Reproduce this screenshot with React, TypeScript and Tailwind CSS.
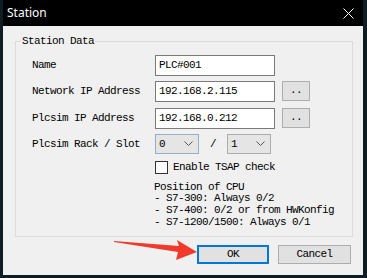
import React from "react";

const mono = "font-['Liberation_Mono',monospace] text-[11px] tracking-[-0.6px] text-black";

function Chevron() {
  return (
    <svg width="9" height="6" viewBox="0 0 9 6" className="ml-auto mr-[5px]">
      <path d="M0.5 0.5 L4.5 4.5 L8.5 0.5" fill="none" stroke="#555" strokeWidth="1" />
    </svg>
  );
}

function Field({ label, value, dots, top }: { label: string; value: string; dots?: boolean; top: string }) {
  return (
    <div className={`flex items-center h-[21px] ${top}`}>
      <span className="w-[123px]">{label}</span>
      <div className="w-[120px] h-[21px] border border-[#7a7a7a] bg-white pl-[3px] flex items-center">{value}</div>
      {dots && (
        <div className="ml-[7px] w-[28px] h-[20px] -mt-[2px] border border-[#adadad] bg-[#e1e1e1] flex items-center justify-center">..</div>
      )}
    </div>
  );
}

export default function App() {
  return (
    <div className="relative w-[367px] h-[278px] bg-[#0e1c24] pl-[3px] pr-[4px] pb-[3px] flex flex-col overflow-hidden">
      <div className="h-[26px] bg-black text-white flex items-center pl-[4px] font-['Noto_Sans',sans-serif] text-[12px]">
        <span>Station</span>
        <svg width="11" height="11" viewBox="0 0 11 11" className="ml-auto mr-[9px]">
          <path d="M0.5 0.5 L10.5 10.5 M10.5 0.5 L0.5 10.5" stroke="#fff" strokeWidth="1" />
        </svg>
      </div>
      <div className={`flex-1 bg-[#f0f0f0] flex flex-col ${mono}`}>
        <div className="relative mt-[15px] ml-[12px] w-[338px] h-[196px] border border-[#dcdcdc] pt-[13px] pl-[16px]">
          <span className="absolute left-[5px] -top-[7px] px-[1px] bg-[#f0f0f0] leading-[12px]">Station Data</span>
          <Field label="Name" value="PLC#001" top="" />
          <Field label="Network IP Address" value="192.168.2.115" dots top="mt-[5px]" />
          <Field label="Plcsim IP Address" value="192.168.0.212" dots top="mt-[6px]" />
          <div className="flex items-center h-[20px] mt-[5px]">
            <span className="w-[123px]">Plcsim Rack / Slot</span>
            <div className="w-[44px] h-[20px] border border-[#98aec4] bg-[#e5e5e5] pl-[3px] flex items-center">
              0<Chevron />
            </div>
            <span className="w-[28px] text-center">/</span>
            <div className="w-[44px] h-[20px] border border-[#adadad] bg-[#e5e5e5] pl-[3px] flex items-center">
              1<Chevron />
            </div>
          </div>
          <div className="flex items-center mt-[5px] ml-[123px]">
            <div className="w-[13px] h-[13px] border border-[#333] bg-white" />
            <span className="ml-[5px]">Enable TSAP check</span>
          </div>
          <div className="ml-[122px] mt-[6px] leading-[11.7px]">
            <div>Position of CPU</div>
            <div>- S7-300: Always 0/2</div>
            <div>- S7-400: 0/2 or from HWKonfig</div>
            <div>- S7-1200/1500: Always 0/1</div>
          </div>
        </div>
        <div className="flex justify-end gap-[9px] mt-[8px] mr-[12px]">
          <div className="w-[72px] h-[19px] border-2 border-[#0078d7] bg-[#e1e1e1] flex items-center justify-center">OK</div>
          <div className="w-[73px] h-[19px] border border-[#adadad] bg-[#e1e1e1] flex items-center justify-center">Cancel</div>
        </div>
      </div>
      <svg className="absolute inset-0 pointer-events-none" width="367" height="278">
        <polygon points="114,241 179,246 177,240 197,252 176,260 178,252 114,242" fill="#f23a2c" />
      </svg>
    </div>
  );
}
